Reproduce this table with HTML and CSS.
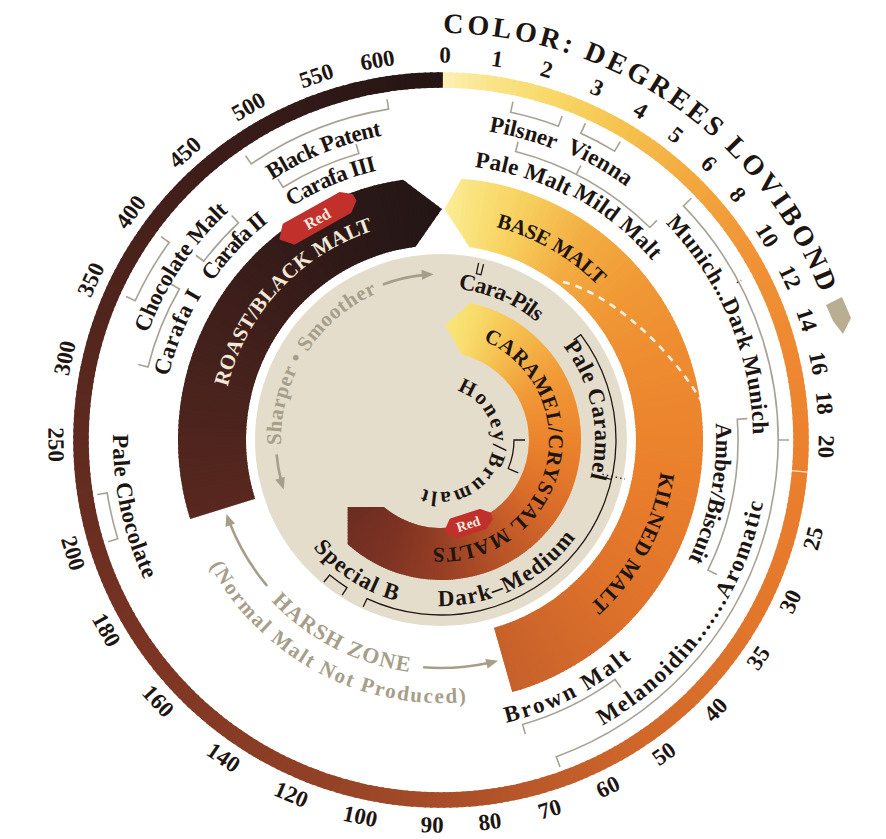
FILE: index.html
```html
<!DOCTYPE html>
<html lang="en">
<head>
<meta charset="utf-8">
<title>Malt Color Wheel</title>
<link rel="stylesheet" href="styles.css">
</head>
<body>
<main class="page">
  <svg id="chart" class="chart" width="886" height="839" viewBox="0 0 886 839" xmlns="http://www.w3.org/2000/svg" role="img" aria-label="Malt color wheel in degrees Lovibond">
    <defs id="defs"></defs>
  </svg>
</main>
<script src="script.js"></script>
</body>
</html>
```

FILE: styles.css
```css
html, body {
  margin: 0;
  padding: 0;
  background: #ffffff;
}
.page {
  width: 886px;
  height: 839px;
  overflow: hidden;
}
.chart {
  display: block;
}
.lbl {
  font-family: "Liberation Serif", "Times New Roman", serif;
  font-weight: 700;
  font-size: 23px;
  fill: #1d1511;
}
.num {
  font-size: 23px;
  text-anchor: middle;
  dominant-baseline: central;
}
.title {
  font-size: 28px;
}
.band {
  font-size: 21px;
}
.sm {
  font-size: 21px;
}
.harsh {
  font-size: 22px;
}
.light {
  fill: #f1e8d7;
}
.tan {
  fill: #a69e89;
}
.badge-text {
  font-family: "Liberation Serif", "Times New Roman", serif;
  font-weight: 700;
  fill: #f6e9df;
  text-anchor: middle;
  dominant-baseline: central;
}
.badge-big { font-size: 16px; }
.badge-small { font-size: 14px; }
.badge {
  fill: #c2302c;
  stroke: #c2302c;
  stroke-width: 2;
  stroke-linejoin: round;
}
.bracket {
  fill: none;
  stroke: #a7a295;
  stroke-width: 1.6;
}
.bracket-dark {
  fill: none;
  stroke: #1d1511;
  stroke-width: 1.3;
}
.dots {
  fill: none;
  stroke: #1d1511;
  stroke-width: 1.3;
  stroke-dasharray: 1.5 3;
}
.arrow {
  fill: none;
  stroke: #a69e89;
  stroke-width: 2.6;
}
.arrow-head {
  fill: #a69e89;
}
.dash {
  fill: none;
  stroke: #ffffff;
  stroke-width: 2.6;
  stroke-dasharray: 7 6;
  opacity: 0.85;
}
.ring-tick {
  stroke: #ffffff;
  stroke-width: 1.2;
  opacity: 0.8;
}
.tan-disc {
  fill: #e4ddcc;
}
.tag {
  fill: #b9ae92;
}
```

FILE: script.js
```js
(function () {
  var NS = 'http://www.w3.org/2000/svg';
  var svg = document.getElementById('chart');
  var defs = document.getElementById('defs');
  var CX = 441, CY = 440;

  function rad(d) { return d * Math.PI / 180; }
  function P(r, t) { return [CX + r * Math.sin(rad(t)), CY - r * Math.cos(rad(t))]; }
  function n2(v) { return (+v).toFixed(2); }
  function pt(r, t) { var p = P(r, t); return n2(p[0]) + ' ' + n2(p[1]); }
  function el(tag, attrs, parent) {
    var e = document.createElementNS(NS, tag);
    for (var k in attrs) e.setAttribute(k, attrs[k]);
    (parent || svg).appendChild(e);
    return e;
  }
  function arc(r, t1, t2) {
    var large = Math.abs(t2 - t1) > 180 ? 1 : 0;
    var sweep = t2 > t1 ? 1 : 0;
    return 'A' + r + ' ' + r + ' 0 ' + large + ' ' + sweep + ' ' + pt(r, t2);
  }
  function arcPath(r, t1, t2) { return 'M' + pt(r, t1) + ' ' + arc(r, t1, t2); }
  function hex(h) { return [parseInt(h.substr(1, 2), 16), parseInt(h.substr(3, 2), 16), parseInt(h.substr(5, 2), 16)]; }
  function colorAt(stops, t) {
    if (t <= stops[0][0]) return stops[0][1];
    for (var i = 0; i < stops.length - 1; i++) {
      var a = stops[i], b = stops[i + 1];
      if (t <= b[0]) {
        var k = (t - a[0]) / (b[0] - a[0]);
        var ca = hex(a[1]), cb = hex(b[1]);
        return 'rgb(' + ca.map(function (v, j) { return Math.round(v + (cb[j] - v) * k); }).join(',') + ')';
      }
    }
    return stops[stops.length - 1][1];
  }

  var ringStops = [[0.3, '#fcf0b4'], [8, '#fae48a'], [18, '#f8d868'], [30, '#f6c24e'], [45, '#f3a63e'], [60, '#f09235'], [90, '#ec812e'], [120, '#e2772c'], [150, '#cd652b'], [175, '#ad5029'], [200, '#924126'], [230, '#7e3624'], [260, '#672d21'], [290, '#51251d'], [320, '#3d1d1a'], [345, '#2d1817'], [360.3, '#241514']];
  var baseStops = [[0, '#fcef9e'], [8, '#fae27c'], [20, '#f7cf5c'], [35, '#f3ad42'], [50, '#f09a36'], [70, '#ee8b30'], [100, '#ea7f2c'], [130, '#df732b'], [165, '#c6602b']];
  var roastStops = [[250, '#5a281f'], [280, '#4a231d'], [310, '#3a1d1a'], [340, '#2a1817'], [362, '#221615']];
  var caramelStops = [[0, '#f9e77f'], [15, '#f8dc6c'], [35, '#f5bf4f'], [60, '#f19b38'], [90, '#ec842d'], [120, '#dc6e2a'], [150, '#bb5628'], [180, '#963f25'], [205, '#7d3323'], [236, '#6a2c22']];

  /* outer colour scale ring */
  var ring = el('g', {});
  for (var t = 0.3; t < 360.3; t += 1) {
    var t2 = Math.min(t + 1.4, 360.3);
    el('path', { d: arcPath(360, t, t2), stroke: colorAt(ringStops, t + 0.5), 'stroke-width': 15.5, fill: 'none' }, ring);
  }
  el('line', { x1: P(352, 95)[0], y1: P(352, 95)[1], x2: P(368, 95)[0], y2: P(368, 95)[1], 'class': 'ring-tick' });

  /* tan disc */
  el('circle', { cx: CX, cy: CY, r: 186, 'class': 'tan-disc' });

  /* gradient bands */
  function band(id, d, stops, t1, t2) {
    var cp = el('clipPath', { id: id }, defs);
    el('path', { d: d }, cp);
    var g = el('g', { 'clip-path': 'url(#' + id + ')' });
    for (var t = t1; t < t2; t += 1) {
      el('path', { d: 'M' + CX + ' ' + CY + ' L' + pt(300, t) + ' ' + arc(300, t, t + 1.5) + ' Z', fill: colorAt(stops, t + 0.5) }, g);
    }
  }
  band('clipRoast',
    'M' + pt(263, 252.5) + ' ' + arc(263, 252.5, 351.7) + ' L' + pt(231, 0.2) + ' L' + pt(195, 352.5) + ' ' + arc(195, 352.5, 252.5) + ' Z',
    roastStops, 250, 362);
  band('clipBase',
    'M' + pt(262, 4.5) + ' ' + arc(262, 4.5, 164.2) + ' L' + pt(195, 164.2) + ' ' + arc(195, 164.2, 8.4) + ' L' + pt(231, 0.9) + ' Z',
    baseStops, -2, 166);
  var cEnd = P(140, 221.8);
  band('clipCaramel',
    'M' + pt(140, 12) + ' ' + arc(140, 12, 221.8) + ' L' + n2(cEnd[0]) + ' 507 L' + pt(88, 220.4) + ' ' + arc(88, 220.4, 14) + ' L' + pt(115, 2) + ' Z',
    caramelStops, -1, 237);

  /* dashed boundary between base and kilned */
  el('path', { d: 'M563 282 C605 292 665 340 702 402', 'class': 'dash' });

  /* brackets */
  function bracket(r, t1, t2, len, cls, mids) {
    var d = 'M' + pt(r + len, t1) + ' L' + pt(r, t1) + ' ' + arc(r, t1, t2) + ' L' + pt(r + len, t2);
    (mids || []).forEach(function (m) { d += ' M' + pt(r, m) + ' L' + pt(r + len, m); });
    el('path', { d: d, 'class': cls });
  }
  var G = 'bracket';
  bracket(335, 12, 20.5, 11, G);
  bracket(337, 24.5, 31, 11, G);
  bracket(298, 14.5, 44.5, 10, G, [27]);
  bracket(337, 46, 160, 11, G, [90]);
  el('path', { d: 'M' + pt(335, 62) + ' L' + pt(340, 62), 'class': 'dots' });
  bracket(297, 86, 116, 10, G);
  bracket(296, 144, 164, 10, G);
  bracket(335, 325.5, 351, 10, G);
  bracket(298, 328, 344, 10, G);
  bracket(297, 307, 317, 10, G);
  bracket(336, 294.5, 306, 10, G);
  bracket(302, 284, 300, 10, G);
  bracket(338, 253, 261, 10, G);

  var D = 'bracket-dark';
  bracket(170, 12, 13.6, 11, D);
  el('path', { d: 'M' + pt(166, 53) + ' L' + pt(175, 53) + ' ' + arc(175, 53, 205) + ' L' + pt(184, 205), 'class': D });
  el('path', { d: 'M' + pt(166, 103) + ' L' + pt(175, 103), 'class': D });
  el('path', { d: 'M' + pt(165, 102) + ' L' + pt(188, 102), 'class': 'dots' });
  bracket(175, 212.5, 219.5, 9, D);
  bracket(73, 90, 113, 11, D);

  /* arrows */
  function arrow(r, ts, te) {
    var s = te > ts ? 1 : -1;
    var back = (10 / r) * 180 / Math.PI;
    el('path', { d: arcPath(r, ts, te - s * back), 'class': 'arrow' });
    var tip = P(r, te), a = rad(te);
    var dx = s * Math.cos(a), dy = s * Math.sin(a);
    var nx = Math.sin(a), ny = -Math.cos(a);
    var bx = tip[0] - 12 * dx, by = tip[1] - 12 * dy;
    el('path', { d: 'M' + n2(tip[0]) + ' ' + n2(tip[1]) + ' L' + n2(bx + 5 * nx) + ' ' + n2(by + 5 * ny) + ' L' + n2(bx - 5 * nx) + ' ' + n2(by - 5 * ny) + ' Z', 'class': 'arrow-head' });
  }
  arrow(165, 265, 252.5);
  arrow(166, 339.5, 357.5);
  arrow(227, 230, 251);
  arrow(228, 184.5, 165.5);

  /* red badges */
  function badge(r, t, w, h, cls) {
    var p = P(r, t);
    var rot = (t > 97 && t < 275) ? t - 180 : t;
    var g = el('g', { transform: 'translate(' + n2(p[0]) + ' ' + n2(p[1]) + ') rotate(' + n2(rot) + ')' });
    var a = w / 2, b = h / 2, c = h * 0.45;
    el('path', { 'class': 'badge', d: 'M' + (-a) + ' 0 L' + (-a + c) + ' ' + (-b) + ' L' + (a - c) + ' ' + (-b) + ' L' + a + ' ' + (-b * 0.3) + ' L' + a + ' ' + (b * 0.3) + ' L' + (a - c) + ' ' + b + ' L' + (-a + c) + ' ' + b + ' Z' }, g);
    var tx = el('text', { 'class': 'badge-text ' + cls, x: 0, y: 0.5 }, g);
    tx.textContent = 'Red';
  }
  badge(254, 330.8, 84, 22, 'badge-big');
  badge(88, 162, 48, 19, 'badge-small');

  /* curved labels */
  var pid = 0;
  function curved(text, rb, t1, t2, cls) {
    var id = 'tp' + (pid++);
    el('path', { id: id, d: arcPath(rb, t1, t2), fill: 'none' }, defs);
    var len = Math.abs(t2 - t1) * Math.PI / 180 * rb;
    var tx = el('text', { 'class': cls });
    var tp = el('textPath', { href: '#' + id, textLength: n2(len), lengthAdjust: 'spacing' }, tx);
    tp.textContent = text;
  }
  var labels = [
    ['COLOR: DEGREES LOVIBOND', 407, 0.3, 68.8, 'lbl title'],
    ['Pilsner', 312, 8.8, 21.3, 'lbl'],
    ['Vienna', 314, 23.4, 36.2, 'lbl'],
    ['Pale Malt', 275, 7.0, 27.3, 'lbl'],
    ['Mild Malt', 277, 28.2, 49.7, 'lbl'],
    ['Munich...Dark Munich', 312, 46.0, 89.0, 'lbl'],
    ['Amber/Biscuit', 275, 86.5, 115.8, 'lbl'],
    ['BASE MALT', 220, 14.5, 45.5, 'lbl band'],
    ['KILNED MALT', 222, 98.3, 138, 'lbl band'],
    ['ROAST/BLACK MALT', 220, 284, 342, 'lbl band light'],
    ['Black Patent', 310, 327, 349, 'lbl'],
    ['Carafa III', 277, 327.3, 346.6, 'lbl'],
    ['Carafa II', 278, 304.7, 321.6, 'lbl'],
    ['Chocolate Malt', 312, 290, 317.1, 'lbl'],
    ['Carafa I', 280, 283.1, 301.2, 'lbl'],
    ['Sharper \u2022 Smoother', 160, 268.2, 336.3, 'lbl sm tan'],
    ['Cara-Pils', 152, 6.5, 39, 'lbl'],
    ['CARAMEL/CRYSTAL MALTS', 108, 23, 184, 'lbl band'],
    ['Honey/Brumalt', 52, 18, 200, 'lbl sm'],
    ['Pale Caramel', 154, 52.5, 104.3, 'lbl'],
    ['Melanoidin.......Aromatic', 328, 150.5, 101, 'lbl'],
    ['Brown Malt', 290, 167, 139, 'lbl'],
    ['Pale Chocolate', 328, 271, 244.8, 'lbl'],
    ['HARSH ZONE', 234, 226.5, 187.8, 'lbl harsh tan'],
    ['(Normal Malt Not Produced)', 263, 241.5, 174.5, 'lbl sm tan'],
    ['Dark\u2013Medium', 166, 181, 126, 'lbl'],
    ['Special B', 167, 230, 195.5, 'lbl']
  ];
  labels.forEach(function (l) { curved(l[0], l[1], l[2], l[3], l[4]); });

  /* scale numbers */
  var nums = [['0', 0.6], ['1', 8.4], ['2', 15.9], ['3', 23.9], ['4', 31.2], ['5', 37.6], ['6', 44.1], ['8', 50.4], ['10', 57.9], ['12', 65], ['14', 71.8], ['16', 78.5], ['18', 84.5], ['20', 91], ['25', 104.8], ['30', 114.8], ['35', 124.5], ['40', 134.5], ['50', 144.6], ['60', 154.3], ['70', 163.6], ['80', 172.7], ['90', 181.3], ['100', 192.1], ['120', 202.9], ['140', 214.4], ['160', 227.3], ['180', 240.4], ['200', 252.9], ['250', 269.3], ['300', 282.3], ['350', 294.6], ['400', 306.3], ['450', 318.3], ['500', 330], ['550', 341.1], ['600', 350.5]];
  nums.forEach(function (n) {
    var t = n[1], p = P(385, t);
    var rot = (t > 97 && t < 275) ? t - 180 : t;
    var tx = el('text', { 'class': 'lbl num', x: n2(p[0]), y: n2(p[1]), transform: 'rotate(' + n2(rot) + ' ' + n2(p[0]) + ' ' + n2(p[1]) + ')' });
    tx.textContent = n[0];
  });

  /* tan tag at end of title */
  el('polygon', { points: '826,305 842,297 851,318 843,334 833,321', 'class': 'tag' });
})();
```
